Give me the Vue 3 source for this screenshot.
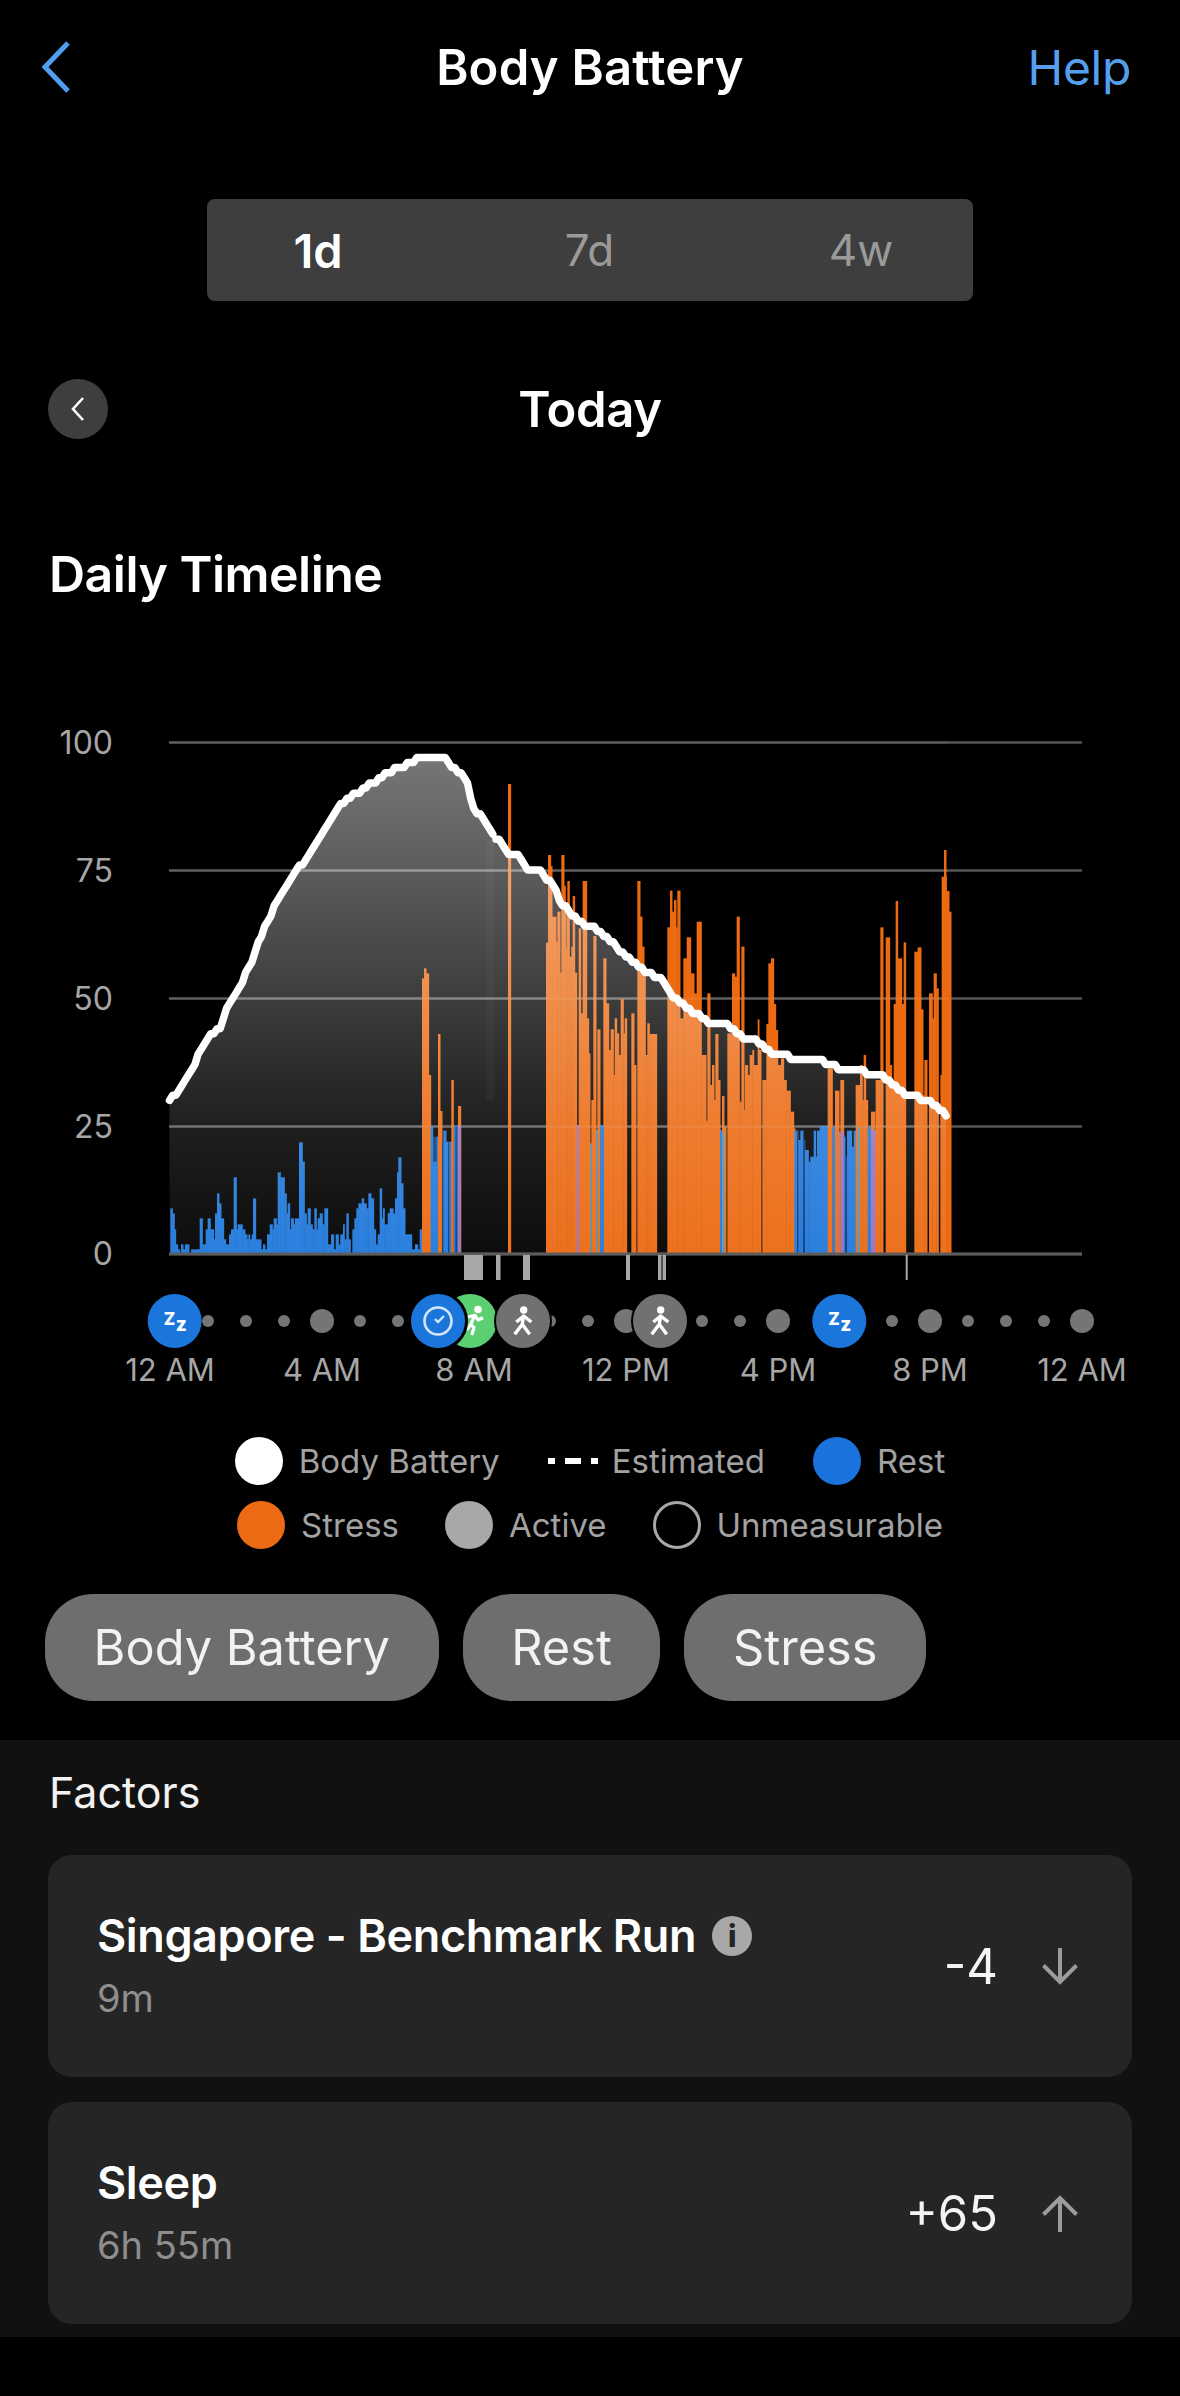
<template>
  <div class="page">
    <header class="topbar">
      <svg class="back" width="32" height="54" viewBox="0 0 32 54">
        <path d="M28 3 L5 27 L28 51" fill="none" stroke="#4f9ff0" stroke-width="5" />
      </svg>
      <h1 class="title">Body Battery</h1>
      <span class="help">Help</span>
    </header>

    <div class="segments">
      <span class="seg active">1d</span>
      <span class="seg">7d</span>
      <span class="seg">4w</span>
    </div>

    <div class="dayrow">
      <span class="roundback">
        <svg width="16" height="26" viewBox="0 0 16 26">
          <path d="M13 2 L3 13 L13 24" fill="none" stroke="#fff" stroke-width="2.6" />
        </svg>
      </span>
      <span class="today">Today</span>
    </div>

    <h2 class="section-title">Daily Timeline</h2>

    <svg class="chart" width="1180" height="700" viewBox="0 700 1180 700">
      <defs>
        <linearGradient id="areaFill" gradientUnits="userSpaceOnUse" x1="0" y1="750" x2="0" y2="1254">
          <stop offset="0" stop-color="#fff" stop-opacity="0.47" />
          <stop offset="0.24" stop-color="#fff" stop-opacity="0.36" />
          <stop offset="0.49" stop-color="#fff" stop-opacity="0.24" />
          <stop offset="0.75" stop-color="#fff" stop-opacity="0.12" />
          <stop offset="1" stop-color="#fff" stop-opacity="0.05" />
        </linearGradient>
      </defs>

      <g v-for="g in grid" :key="g.label">
        <line x1="169" x2="1082" :y1="g.y" :y2="g.y" stroke="#fff" stroke-opacity="0.33" stroke-width="2.6" />
        <text class="ylabel" x="113" :y="g.y + 11" text-anchor="end">{{ g.label }}</text>
      </g>

      <rect
        v-for="(b, i) in bars"
        :key="i"
        :x="b.x"
        :y="b.y"
        :width="b.w"
        :height="1254 - b.y"
        :fill="colors[b.kind]"
      />

      <line v-for="g in grid.slice(0, 4)" :key="'o' + g.y" x1="169" x2="948" :y1="g.y" :y2="g.y" stroke="#fff" stroke-opacity="0.07" stroke-width="2.6" />
      <path :d="areaPath" fill="url(#areaFill)" />
      <rect x="486" y="840" width="8" height="260" fill="#fff" fill-opacity="0.03" />
      <rect x="169" y="1252.5" width="913" height="3" fill="#5c5c5c" />
      <path :d="linePath" fill="none" stroke="#fff" stroke-width="7.5" stroke-linejoin="round" stroke-linecap="round" />

      <rect v-for="t in ticks" :key="t[0]" :x="t[0]" y="1255" :width="t[1]" height="25" fill="#a8a8a8" />

      <circle v-for="d in dots" :key="d.x" :cx="d.x" cy="1321" :r="d.r" fill="#757575" />

      <g transform="translate(470 1321)">
        <circle r="27" fill="#5ccf73" />
        <circle cx="8" cy="-11.5" r="3.8" fill="#fff" />
        <path d="M5 -5.7 L0.7 3.3 L4 6.7 L1.7 14 M13 -3.3 L8 -1 L5 -5.7 L-2 -4 M0.7 3.3 L-3 9" fill="none" stroke="#fff" stroke-width="3.2" stroke-linejoin="round" />
      </g>
      <g transform="translate(438 1321)">
        <circle r="28.5" fill="#1b76dc" stroke="#000" stroke-width="3" />
        <circle r="13.5" fill="none" stroke="#d3e6fb" stroke-width="2.6" />
        <path d="M-3 -2 L0 1 L6 -5" fill="none" stroke="#d3e6fb" stroke-width="2.4" />
      </g>
      <g v-for="x in [523, 660]" :key="x" :transform="`translate(${x} 1321)`">
        <circle r="28" fill="#717171" stroke="#000" stroke-width="2" />
        <circle cx="0.7" cy="-11" r="3.7" fill="#fff" />
        <path d="M0.7 -6 L-0.7 3.3 M-6.7 1 L0.7 -5 L8.3 1 M6.7 13.3 L-0.7 3.3 L-8.3 13.3" fill="none" stroke="#fff" stroke-width="3.4" stroke-linejoin="round" />
      </g>
      <g v-for="x in [174.7, 839.3]" :key="x" :transform="`translate(${x} 1321)`">
        <circle r="27" fill="#1b76dc" />
        <text class="zz" x="-11" y="4" font-size="17">Z</text>
        <text class="zz" x="1" y="9.5" font-size="19">z</text>
      </g>

      <text v-for="h in hourLabels" :key="h.x" class="xlabel" :x="h.x" y="1381" text-anchor="middle">{{ h.text }}</text>
    </svg>

    <div class="legend">
      <div class="legend-row first">
        <span class="item"><i class="swatch white"></i>Body Battery</span>
        <span class="item">
          <svg class="dash" width="50" height="8" viewBox="0 0 50 8">
            <rect x="0" y="1" width="7" height="6" fill="#fff" />
            <rect x="17" y="1" width="16" height="6" fill="#fff" />
            <rect x="43" y="1" width="7" height="6" fill="#fff" />
          </svg>Estimated
        </span>
        <span class="item"><i class="swatch blue"></i>Rest</span>
      </div>
      <div class="legend-row">
        <span class="item"><i class="swatch orange"></i>Stress</span>
        <span class="item"><i class="swatch grey"></i>Active</span>
        <span class="item"><i class="swatch hollow"></i>Unmeasurable</span>
      </div>
    </div>

    <div class="chips">
      <span class="chip">Body Battery</span>
      <span class="chip">Rest</span>
      <span class="chip">Stress</span>
    </div>

    <section class="factors">
      <div class="factors-label">Factors</div>
      <div class="card" v-for="f in factors" :key="f.name">
        <div class="card-text">
          <div class="card-name">
            {{ f.name }}
            <span v-if="f.info" class="info">i</span>
          </div>
          <div class="card-sub">{{ f.time }}</div>
        </div>
        <span class="card-value">{{ f.value }}</span>
        <svg class="arrow" width="36" height="37" viewBox="0 0 36 37">
          <path v-if="f.down" d="M18 0 V34 M1.5 17.5 L18 34 L34.5 17.5" fill="none" stroke="#9c9c9c" stroke-width="4" />
          <path v-else d="M18 37 V3 M1.5 19.5 L18 3 L34.5 19.5" fill="none" stroke="#9c9c9c" stroke-width="4" />
        </svg>
      </div>
    </section>
  </div>
</template>

<script setup>
const colors = { o: '#ec6a12', b: '#2079dc', n: '#0f3a78', p: '#a070b0', t: '#5f93a8' }

const grid = [
  { label: '100', y: 742.5 },
  { label: '75', y: 870.5 },
  { label: '50', y: 998.5 },
  { label: '25', y: 1126.5 },
  { label: '0', y: 1254 }
]

const factors = [
  { name: 'Singapore - Benchmark Run', time: '9m', value: '-4', down: true, info: true },
  { name: 'Sleep', time: '6h 55m', value: '+65', down: false, info: false }
]

const hourLabels = ['12 AM', '4 AM', '8 AM', '12 PM', '4 PM', '8 PM', '12 AM'].map((text, i) => ({
  text,
  x: 170 + i * 152
}))

const ticks = [[464, 19], [496, 4.5], [523, 7], [626, 4], [658, 3.5], [662.5, 3.5], [905.7, 2]]

// one dot per hour, the ones under an icon are left out
const hidden = [0, 7, 8, 9, 13, 17, 18]
const dots = []
for (let h = 0; h <= 24; h++) {
  if (!hidden.includes(h)) dots.push({ x: 170 + h * 38, r: h % 4 === 0 ? 12 : 6 })
}

// bar runs read off the crops: [x0, x1, top, kind], coordinates at 3x from a crop origin
// the 0.5 overlap keeps neighbouring runs from showing a seam
const read = (ox, oy, rows) =>
  rows.map(([a, b, top, kind = 'o']) => ({ x: ox + a / 3, w: (b - a) / 3 + 0.5, y: oy + top / 3, kind }))

const restRuns = [
  [16, 22, 295], [22, 28, 310], [28, 32, 358], [32, 38, 403], [38, 44, 418], [48, 54, 403], [54, 60, 418], [60, 72, 403],
  [78, 104, 418], [104, 112, 325], [112, 122, 403], [122, 128, 358], [128, 136, 325], [136, 146, 358], [146, 150, 388],
  [150, 156, 310], [156, 162, 250], [162, 168, 280], [168, 176, 325], [176, 182, 388], [182, 192, 403], [192, 198, 373],
  [198, 206, 358], [206, 214, 202], [214, 218, 358], [218, 232, 343], [232, 240, 358], [240, 246, 373], [246, 250, 388],
  [250, 254, 373], [254, 260, 388], [260, 264, 373], [264, 272, 265], [272, 288, 388], [288, 294, 418], [294, 300, 403],
  [300, 306, 418], [306, 314, 373], [314, 322, 343], [322, 326, 358], [326, 334, 325], [334, 338, 343], [338, 346, 187],
  [346, 358, 202], [358, 364, 250], [364, 368, 310], [368, 374, 280], [374, 378, 358], [378, 386, 325], [386, 390, 343],
  [390, 402, 325], [402, 412, 97], [412, 418, 155], [418, 424, 310], [424, 428, 343], [428, 436, 295], [436, 442, 343],
  [442, 448, 358], [448, 454, 295], [454, 458, 358], [458, 464, 325], [464, 472, 310], [472, 478, 343], [478, 488, 295],
  [488, 498, 403], [498, 506, 373], [506, 512, 418], [512, 520, 373], [520, 526, 403], [526, 534, 373], [534, 538, 343],
  [538, 544, 388], [544, 550, 310], [550, 556, 388], [562, 568, 358], [568, 574, 325], [574, 580, 295], [580, 590, 280],
  [590, 596, 265], [596, 604, 280], [604, 610, 295], [610, 618, 250], [618, 626, 265], [626, 632, 358], [632, 638, 403],
  [638, 644, 373], [644, 650, 235], [650, 654, 325], [654, 658, 295], [658, 668, 343], [668, 674, 310], [674, 684, 295],
  [684, 690, 310], [690, 696, 265], [696, 700, 187], [700, 708, 142], [708, 714, 220], [714, 720, 295], [720, 732, 373],
  [732, 740, 373], [740, 750, 418], [750, 758, 403], [758, 764, 418], [764, 772, 358]
].map(r => [...r, 'b'])

const morning = [
  [36, 42, 595], [42, 48, 565], [48, 56, 580], [56, 62, 885],
  [68, 80, 1070, 'n'], [62, 68, 1037, 'b'], [68, 80, 1145, 'b'], [80, 84, 1070, 'b'], [84, 90, 762], [90, 96, 993],
  [96, 100, 1085, 'n'], [100, 108, 1052, 'b'], [108, 114, 1085, 'b'], [114, 118, 1085, 'n'], [118, 124, 1085, 'b'],
  [124, 130, 900], [132, 144, 1037, 'b'], [136, 140, 1037, 'n'], [144, 152, 978], [144, 152, 1037, 'p'], [294, 302, 12]
]

const midday = [
  [18, 24, 278], [24, 32, 15], [32, 36, 48], [36, 48, 200], [48, 52, 275], [52, 60, 185], [60, 64, 368], [64, 72, 15],
  [72, 76, 108], [76, 78, 185], [78, 80, 295], [80, 82, 185], [82, 88, 93], [88, 94, 320], [94, 98, 290], [98, 104, 138],
  [104, 110, 368], [116, 122, 235], [122, 128, 490], [128, 140, 93], [140, 146, 505], [146, 150, 610], [154, 162, 750],
  [160, 168, 258], [172, 180, 538], [190, 198, 325], [198, 206, 460], [206, 212, 600], [212, 220, 538], [220, 224, 675],
  [224, 230, 505], [230, 236, 550], [236, 242, 615], [242, 250, 447], [250, 254, 550], [254, 260, 505], [274, 282, 490],
  [282, 288, 645], [292, 300, 93], [300, 306, 200], [306, 312, 290], [312, 316, 360], [316, 322, 615], [322, 328, 520],
  [328, 350, 552], [382, 390, 232], [390, 396, 122], [396, 402, 185], [402, 408, 150], [408, 412, 232], [412, 420, 122],
  [420, 430, 505], [430, 440, 325], [440, 452, 262], [452, 462, 370], [462, 470, 430], [470, 484, 215], [484, 498, 615],
  [498, 504, 812], [502, 510, 430], [510, 516, 705], [516, 522, 645], [522, 528, 750], [526, 534, 552], [534, 540, 690],
  [546, 552, 738], [552, 558, 830], [562, 576, 550], [576, 584, 370], [584, 590, 380], [590, 598, 200], [598, 604, 755],
  [604, 612, 290], [612, 618, 780],
  [110, 116, 825, 'p'], [150, 154, 880, 't'], [168, 172, 840, 't'], [180, 190, 825, 'b'], [540, 546, 840, 'b'], [546, 552, 850, 't']
]

const evening = [
  [0, 8, 645], [8, 14, 675], [14, 22, 615], [22, 26, 600], [26, 38, 645], [38, 42, 508], [42, 48, 600], [52, 64, 690],
  [64, 72, 522], [70, 78, 340], [78, 86, 325], [86, 92, 462], [92, 98, 540], [98, 108, 645], [108, 116, 625], [116, 124, 690],
  [124, 136, 722], [136, 146, 785], [146, 150, 835],
  [148, 156, 842, 'b'], [156, 160, 842, 'n'], [160, 166, 870, 'b'], [166, 174, 842, 'b'], [174, 180, 870, 'n'], [180, 190, 900, 'b'],
  [190, 196, 935, 'b'], [196, 206, 920, 'b'], [206, 212, 842, 'b'], [212, 216, 920, 'b'], [216, 224, 842, 'b'], [224, 248, 828, 'b'],
  [248, 262, 655], [262, 270, 830, 'b'], [270, 282, 722], [282, 286, 845, 'p'], [286, 296, 690], [288, 296, 845, 'p'], [296, 300, 860, 'b'],
  [300, 306, 920, 'n'], [306, 320, 842, 'b'], [320, 326, 890, 'b'], [326, 332, 842, 'b'], [332, 345, 705], [338, 344, 830, 't'],
  [345, 352, 645], [352, 356, 750], [356, 362, 615], [362, 368, 750], [368, 378, 830, 'b'], [378, 390, 785], [378, 392, 840, 'p'],
  [392, 406, 690], [406, 414, 232], [422, 434, 262], [434, 440, 645], [440, 446, 710], [446, 452, 462], [452, 458, 153],
  [458, 470, 325], [470, 476, 462], [476, 482, 277], [508, 518, 305], [518, 528, 292], [528, 534, 478], [534, 538, 735],
  [538, 546, 630], [552, 562, 430], [562, 566, 505], [566, 574, 370], [574, 580, 415], [586, 590, 675], [590, 604, 80],
  [597, 603, 0], [604, 612, 123], [612, 618, 185]
]

const bars = [
  ...read(165, 1110, restRuns),
  ...read(410, 780, morning),
  ...read(540, 850, midday),
  ...read(745, 850, evening)
]

// body battery curve, sampled on the 5 minute grid and snapped to whole points
const curveA = [
  [362, 1082], [400, 1040], [430, 985], [470, 915], [510, 880], [520, 830], [555, 790], [590, 710], [640, 590], [680, 520],
  [710, 465], [750, 425], [790, 355], [840, 285], [880, 255], [950, 212], [1000, 185], [1060, 157], [1130, 157], [1160, 185],
  [1195, 215], [1210, 280], [1240, 325], [1260, 345], [1280, 375], [1320, 420], [1345, 425]
].map(([x, y]) => [40 + x / 2.8, 700 + y / 2.703])
const curveB = [
  [25, 460], [55, 460], [90, 500], [120, 555], [180, 610], [200, 610], [250, 650], [300, 695], [340, 725], [400, 755],
  [425, 795], [460, 825], [510, 860], [535, 878], [585, 878], [625, 918], [660, 918], [710, 960], [745, 960], [755, 970],
  [845, 970], [855, 988], [885, 988], [895, 1000], [960, 1000], [980, 1015], [1015, 1015], [1045, 1040], [1085, 1070],
  [1140, 1080], [1195, 1125]
].map(([x, y]) => [520 + x / 2.8, 700 + y / 2.703])
const curve = [...curveA, ...curveB]

const yAt = x => {
  for (let i = 1; i < curve.length; i++) {
    if (x <= curve[i][0]) {
      const [x0, y0] = curve[i - 1]
      const [x1, y1] = curve[i]
      return y0 + ((y1 - y0) * (x - x0)) / (x1 - x0)
    }
  }
  return curve[curve.length - 1][1]
}

const samples = []
for (let x = 169.5; x <= 947; x += 3.17) {
  samples.push([x, 1254 - Math.round((1254 - yAt(x)) / 5.12) * 5.12])
}

const fmt = p => `${p[0].toFixed(1)} ${p[1].toFixed(1)}`
const linePath = samples
  .map((p, i) => {
    const afterGap = p[0] > 493 && samples[i - 1][0] <= 493
    return (i === 0 || afterGap ? 'M' : 'L') + fmt(p)
  })
  .join(' ')
const areaPath = `M169.5 1254 L${samples.map(fmt).join(' L')} L${samples[samples.length - 1][0].toFixed(1)} 1254 Z`
</script>

<style scoped>
.page {
  width: 1180px;
  height: 2396px;
  overflow: hidden;
  background: #000;
  color: #fff;
  font-family: Inter, "Noto Sans", sans-serif;
}

.topbar {
  position: relative;
  height: 134px;
  display: flex;
  align-items: center;
  justify-content: space-between;
  padding: 0 49px 0 40px;
}
.title {
  margin: 0;
  position: absolute;
  left: 0;
  right: 0;
  text-align: center;
  font-size: 49px;
  font-weight: 600;
  letter-spacing: 0.2px;
}
.help {
  font-size: 48px;
  color: #569fec;
  letter-spacing: -0.3px;
}

.segments {
  margin: 65px auto 0;
  width: 766px;
  height: 102px;
  box-sizing: border-box;
  padding-left: 71px;
  display: flex;
  align-items: center;
  gap: 191.5px;
  background: #3e3e3e;
  border-radius: 8px;
}
.seg {
  width: 80px;
  text-align: center;
  font-size: 44px;
  color: #9a9a9a;
}
.seg.active {
  color: #fff;
  font-size: 47px;
  font-weight: 600;
}

.dayrow {
  position: relative;
  margin-top: 78px;
  height: 60px;
  padding-left: 48px;
  display: flex;
  align-items: center;
}
.roundback {
  width: 60px;
  height: 60px;
  border-radius: 50%;
  background: #3e3e3e;
  display: flex;
  align-items: center;
  justify-content: center;
}
.today {
  position: absolute;
  left: 0;
  right: 0;
  text-align: center;
  font-size: 49px;
  font-weight: 600;
  letter-spacing: -0.3px;
}

.section-title {
  margin: 109px 0 0 49px;
  font-size: 50px;
  line-height: 52px;
  font-weight: 600;
  letter-spacing: -0.5px;
}

.chart {
  display: block;
  margin-top: 100px;
}
.ylabel,
.xlabel {
  font-size: 32px;
  fill: #a6a6a6;
}
.xlabel {
  font-size: 31px;
}
.zz {
  font-weight: 800;
  fill: #fff;
}

.legend {
  margin-top: 37px;
  display: flex;
  flex-direction: column;
  gap: 16px;
}
.legend-row {
  display: flex;
  justify-content: center;
  gap: 46px;
}
.legend-row.first {
  gap: 48px;
}
.item {
  display: flex;
  align-items: center;
  height: 48px;
  font-size: 33px;
  color: #a2a2a2;
}
.swatch {
  display: block;
  box-sizing: border-box;
  width: 48px;
  height: 48px;
  border-radius: 50%;
  margin-right: 16px;
}
.swatch.white { background: #fff; }
.swatch.blue { background: #1a73dc; }
.swatch.orange { background: #ec6a14; }
.swatch.grey { background: #a8a8a8; }
.swatch.hollow { border: 3px solid #a8a8a8; }
.dash {
  margin-right: 14px;
}

.chips {
  margin: 45px 0 0 45px;
  display: flex;
  gap: 24px;
}
.chip {
  height: 107px;
  display: flex;
  align-items: center;
  padding: 0 48.6px;
  border-radius: 48px;
  background: #6e6e6e;
  color: #f2f2f2;
  font-size: 48.7px;
}

.factors {
  margin-top: 39px;
  height: 597px;
  box-sizing: border-box;
  padding: 28px 48px 0;
  background: #111;
}
.factors-label {
  margin-left: 1px;
  margin-bottom: 39px;
  font-size: 43px;
  line-height: 48px;
  color: #f2f2f2;
}
.card {
  height: 222px;
  margin-bottom: 25px;
  padding: 0 54px 0 49px;
  box-sizing: border-box;
  display: flex;
  align-items: center;
  background: #252525;
  border-radius: 24px;
}
.card-text {
  flex: 1;
  margin-top: -3px;
}
.card-name {
  display: flex;
  align-items: center;
  gap: 16px;
  font-size: 45px;
  line-height: 56px;
  font-weight: 600;
  letter-spacing: -0.4px;
}
.card-sub {
  margin-top: 11px;
  font-size: 38px;
  line-height: 46px;
  color: #8e8e8e;
}
.info {
  width: 40px;
  height: 40px;
  border-radius: 50%;
  background: #a8a8a8;
  color: #252525;
  font-size: 30px;
  line-height: 40px;
  font-weight: 800;
  text-align: center;
}
.card-value {
  font-size: 49px;
  color: #f4f4f4;
}
.arrow {
  margin-left: 44px;
}
</style>

<style>
html,
body {
  background: #000;
}
</style>
